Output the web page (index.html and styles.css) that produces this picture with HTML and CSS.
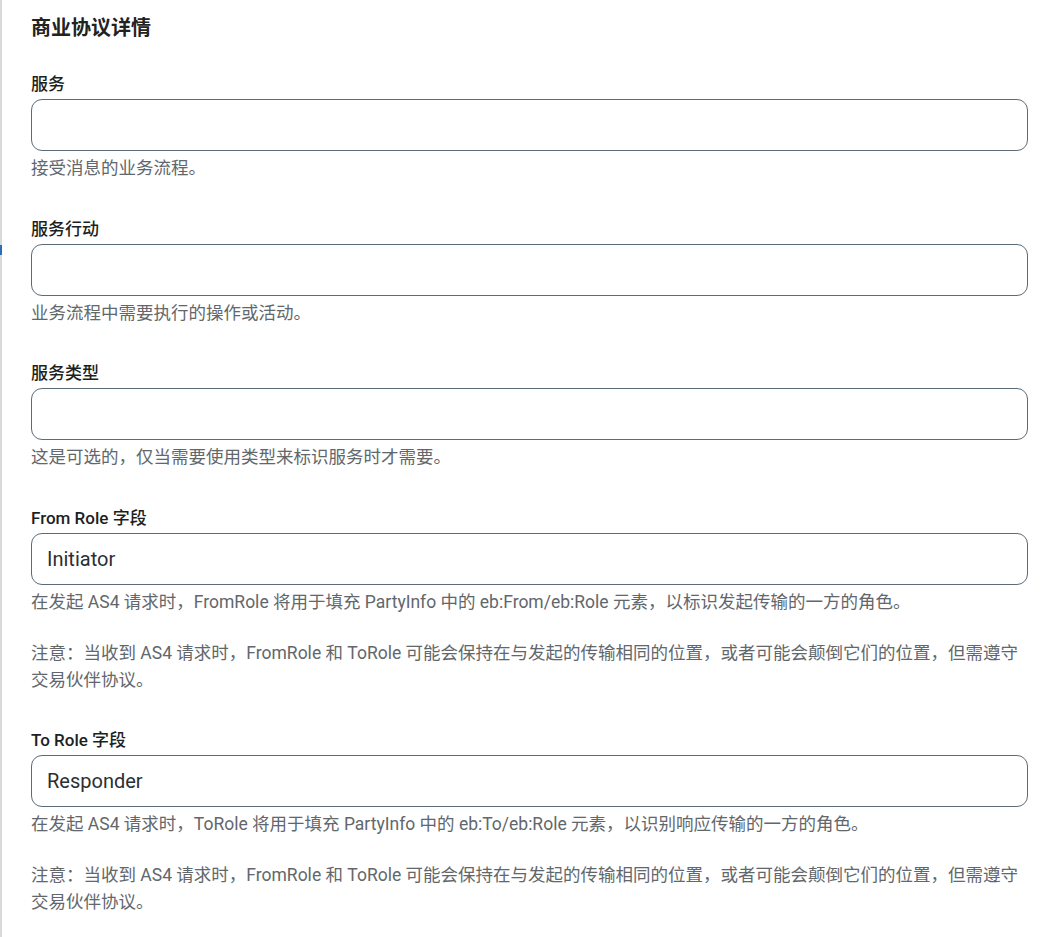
FILE: index.html
```html
<!DOCTYPE html>
<html lang="zh-CN">

<head>
    <meta charset="UTF-8" />
    <meta name="viewport" content="width=device-width, initial-scale=1.0" />
    <title>商业协议详情</title>
    <link rel="stylesheet" href="styles.css">
</head>

<body>
    <div class="panel">
        <span class="marker"></span>
        <h2 class="title">商业协议详情</h2>

        <div class="field">
            <label class="label" for="service">服务</label>
            <input class="input" id="service" />
            <p class="help">接受消息的业务流程。</p>
        </div>

        <div class="field">
            <label class="label" for="action">服务行动</label>
            <input class="input" id="action" />
            <p class="help">业务流程中需要执行的操作或活动。</p>
        </div>

        <div class="field">
            <label class="label" for="type">服务类型</label>
            <input class="input" id="type" />
            <p class="help">这是可选的，仅当需要使用类型来标识服务时才需要。</p>
        </div>

        <div class="field">
            <label class="label" for="fromRole">From Role 字段</label>
            <input class="input" id="fromRole" value="Initiator" />
            <p class="help">在发起 AS4 请求时，FromRole 将用于填充 PartyInfo 中的 eb:From/eb:Role 元素，以标识发起传输的一方的角色。</p>
            <p class="help note">注意：当收到 AS4 请求时，FromRole 和 ToRole 可能会保持在与发起的传输相同的位置，或者可能会颠倒它们的位置，但需遵守交易伙伴协议。</p>
        </div>

        <div class="field">
            <label class="label" for="toRole">To Role 字段</label>
            <input class="input" id="toRole" value="Responder" />
            <p class="help">在发起 AS4 请求时，ToRole 将用于填充 PartyInfo 中的 eb:To/eb:Role 元素，以识别响应传输的一方的角色。</p>
            <p class="help note">注意：当收到 AS4 请求时，FromRole 和 ToRole 可能会保持在与发起的传输相同的位置，或者可能会颠倒它们的位置，但需遵守交易伙伴协议。</p>
        </div>
    </div>
</body>

</html>
```

FILE: styles.css
```css
* {
    box-sizing: border-box;
}

body {
    margin: 0;
    padding: 0;
    background: #ffffff;
    font-family: Roboto, "Noto Sans CJK SC", sans-serif;
    color: #1f2327;
}

.panel {
    position: relative;
    border-left: 2px solid #d9d9d9;
    padding: 17.5px 30px 30px 29px;
    min-height: 100vh;
}

.marker {
    position: absolute;
    left: -2px;
    top: 245px;
    width: 2px;
    height: 10px;
    background: #2a6ebb;
}

.title {
    margin: 0 0 1px;
    font-size: 20px;
    line-height: 20px;
    font-weight: 700;
    color: #222222;
}

.field {
    display: flex;
    flex-direction: column;
    margin-top: 35.5px;
}

.label {
    font-size: 17px;
    line-height: 22px;
    font-weight: 500;
    color: #1d1f22;
    margin-bottom: 4px;
}

.input {
    height: 52px;
    width: 100%;
    border: 1px solid #5b6b7a;
    border-radius: 11px;
    padding: 0 15px;
    font-family: Roboto, "Noto Sans CJK SC", sans-serif;
    font-size: 20px;
    color: #2b2f33;
    background: #ffffff;
    outline: none;
}

.help {
    margin: 4px 0 0;
    font-size: 17.5px;
    line-height: 27px;
    color: #62676c;
}

.note {
    margin-top: 24px;
}
```
